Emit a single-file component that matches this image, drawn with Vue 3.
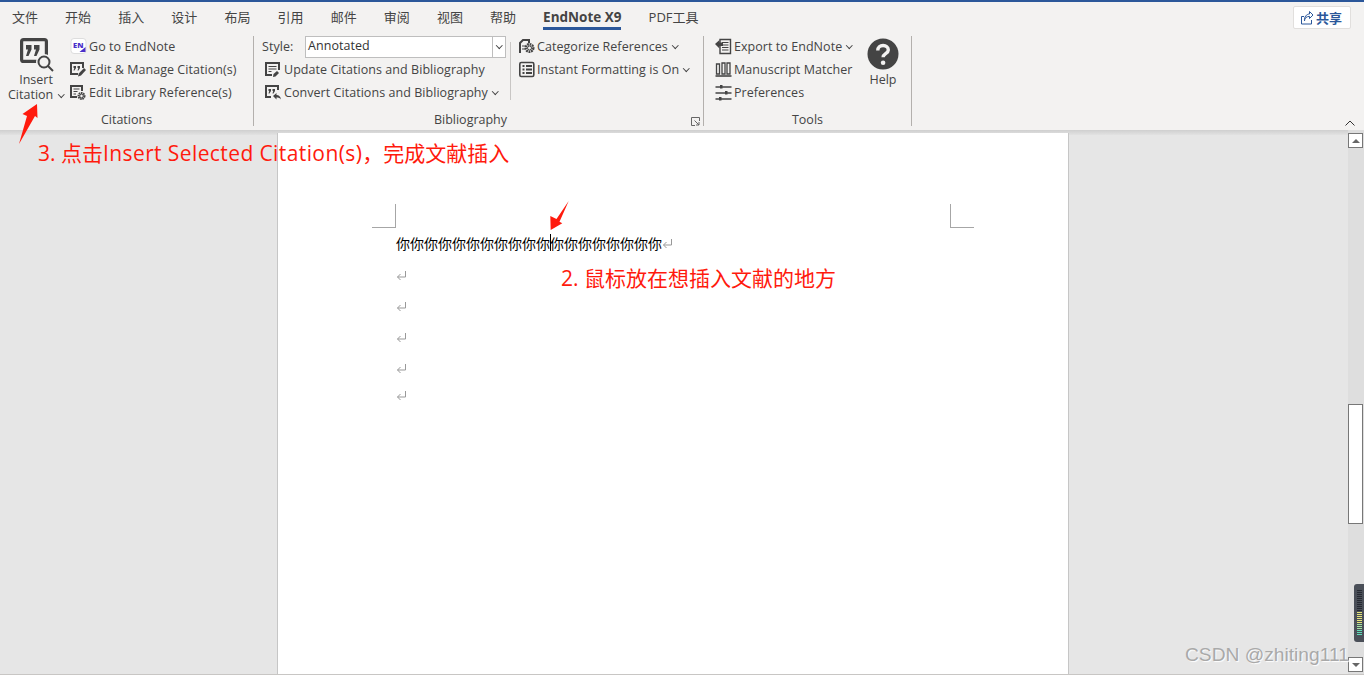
<template>
  <div class="word">
    <div class="topline"></div>

    <div class="tabs">
      <span
        v-for="tab in tabs"
        :key="tab"
        class="tab"
        :class="{ active: tab === 'EndNote X9' }"
      >{{ tab }}</span>
      <button class="share">
        <svg width="16" height="16" viewBox="0 0 16 16" fill="none" stroke="#2b579a" stroke-width="1">
          <path d="M5 6.500H2.500v7.500h10V10" />
          <path d="M5.500 11c0-3 2-4.600 5-4.600V8.500l3.500-3.500L10.500 1.500V4C7.500 4 5 7 5.500 11z" />
        </svg>
        共享
      </button>
    </div>

    <div class="ribbon">
      <section class="group citations">
        <div class="group-body">
          <div class="big-btn">
            <svg class="insert-icon" width="36" height="36" viewBox="0 0 36 36">
              <rect x="3.600" y="2.600" width="24.800" height="21.800" rx="2" fill="none" stroke="#444" stroke-width="3.200" />
              <path d="M8 8h5.500v4.500L10.500 19H8l2-6.500H8zM16 8h5.500v4.500L18.500 19H16l2-6.500h-2z" fill="#444" />
              <circle cx="26" cy="25" r="8" fill="#f3f2f1" />
              <circle cx="26" cy="25" r="5.500" fill="none" stroke="#444" stroke-width="2" />
              <path d="M30 29l5 5" stroke="#444" stroke-width="2" />
            </svg>
            <span class="big-label">Insert</span>
            <span class="big-label citation-label">Citation <i class="chev"></i></span>
          </div>
          <div class="rows">
            <div class="row">
              <svg class="ico" width="17" height="17" viewBox="0 0 17 17">
                <rect x="1" y="0.500" width="15" height="15" rx="3" fill="#fff" stroke="#ddd" />
                <text x="3" y="10" class="en">EN</text>
                <path d="M9.500 14l6-5v5z" fill="#4b2fc9" />
              </svg>
              Go to EndNote
            </div>
            <div class="row">
              <svg class="ico" width="17" height="17" viewBox="0 0 17 17">
                <path d="M8 13H1V2h12v5" fill="none" stroke="#444" stroke-width="2" />
                <path d="M3.500 5h2.500v2L4.500 9.500H3.500l.8-2.500h-.8zM7.500 5H10v2L8.500 9.500h-1l.8-2.500h-.8z" fill="#444" />
                <path d="M8 15.500l.8-3L14 7l2 2-5 5.500z" fill="#444" />
              </svg>
              Edit &amp; Manage Citation(s)
            </div>
            <div class="row">
              <svg class="ico" width="17" height="17" viewBox="0 0 17 17">
                <path d="M7 13H1V2h11v5" fill="none" stroke="#444" stroke-width="2" />
                <path d="M3.500 5h6M3.500 7.500h4M3.500 10h2.500" stroke="#444" />
                <circle cx="11.500" cy="12" r="3" fill="none" stroke="#444" stroke-width="2" stroke-dasharray="1.600 .6" />
                <circle cx="11.500" cy="12" r="1.800" fill="none" stroke="#444" />
              </svg>
              Edit Library Reference(s)
            </div>
          </div>
        </div>
        <div class="group-label">Citations</div>
      </section>
      <div class="sep"></div>

      <section class="group biblio">
        <div class="group-body">
          <div class="rows left-col">
            <div class="row style-row">
              <span class="style-label">Style:</span>
              <div class="select">
                <span class="select-value">Annotated</span>
                <span class="select-btn"><i class="chev"></i></span>
              </div>
            </div>
            <div class="row">
              <svg class="ico" width="17" height="17" viewBox="0 0 17 17">
                <path d="M7 14H1V2h13v7" fill="none" stroke="#444" stroke-width="2" />
                <path d="M3.500 5.500h8M3.500 8h8M3.500 10.500h3" stroke="#444" />
                <path d="M8 16l.5-3 3.500-3 2 2-3.500 3.500z" fill="#444" />
              </svg>
              Update Citations and Bibliography
            </div>
            <div class="row">
              <svg class="ico" width="17" height="17" viewBox="0 0 17 17">
                <path d="M6 13H1V2h12v4" fill="none" stroke="#444" stroke-width="2" />
                <path d="M3.500 5H6v2L4.500 9.500h-1l.7-2.500h-.7zM7.500 5H10v2L8.500 9.500h-1l.7-2.500h-.7z" fill="#444" />
                <path d="M8 12l3.500-3v2c2.500 0 4 1.500 4.500 4.500-1-1.500-2.500-2-4.500-2v2z" fill="#444" />
              </svg>
              Convert Citations and Bibliography <i class="chev"></i>
            </div>
          </div>
          <div class="inner-sep"></div>
          <div class="rows right-col">
            <div class="row">
              <svg class="ico" width="17" height="17" viewBox="0 0 17 17">
                <path d="M1 15V5l3-3h6v3" fill="none" stroke="#444" stroke-width="2" />
                <path d="M3 8h3M3 11h3" stroke="#444" />
                <circle cx="10.500" cy="10" r="3.800" fill="none" stroke="#444" stroke-width="2.400" stroke-dasharray="1.800 .7" />
                <circle cx="10.500" cy="10" r="2" fill="none" stroke="#444" />
              </svg>
              Categorize References <i class="chev"></i>
            </div>
            <div class="row">
              <svg class="ico" width="17" height="17" viewBox="0 0 17 17">
                <rect x="0.800" y="1.500" width="14" height="14" rx="1.500" fill="none" stroke="#444" stroke-width="1.600" />
                <path d="M3.500 5h2M7 5h6M3.500 8.500h2M7 8.500h6M3.500 12h2M7 12h6" stroke="#444" stroke-width="1.800" />
              </svg>
              Instant Formatting is On <i class="chev"></i>
            </div>
          </div>
        </div>
        <div class="group-label bib-label">Bibliography</div>
        <svg class="launcher" width="9" height="9" viewBox="0 0 9 9" fill="none" stroke="#666">
          <path d="M8.500 4V.5H.5v8H4" />
          <path d="M3.500 3.500l4.500 4.500M8 5v3H5" />
        </svg>
      </section>
      <div class="sep"></div>

      <section class="group tools">
        <div class="group-body">
          <div class="rows tool-rows">
            <div class="row">
              <svg class="ico" width="17" height="17" viewBox="0 0 17 17">
                <path d="M5 1.500h10.500v14H5z" fill="none" stroke="#444" stroke-width="1.400" />
                <path d="M7 4.500h6.500M7 7h6.500M7 9.500h6.500M7 12h6.500" stroke="#444" />
                <path d="M0 6l4.500-4v2.500H8V8H4.500v2.500z" fill="#444" />
              </svg>
              Export to EndNote <i class="chev"></i>
            </div>
            <div class="row">
              <svg class="ico" width="17" height="17" viewBox="0 0 17 17" fill="none" stroke="#444">
                <path d="M1.500 13V3h3v10zM7 13V2h3v11zM12 13V2h3v11z" stroke-width="1.300" />
                <path d="M0.500 15h16" stroke-width="1.600" />
              </svg>
              Manuscript Matcher
            </div>
            <div class="row">
              <svg class="ico" width="17" height="17" viewBox="0 0 17 17">
                <path d="M0.500 3h16M0.500 9h16M0.500 15h16" stroke="#444" stroke-width="1.300" />
                <path d="M5 1h2.500v3.500H5zM10 7h2.500v3.500H10zM4 13h2.500v3.500H4z" fill="#444" />
              </svg>
              Preferences
            </div>
          </div>
          <div class="help">
            <svg width="32" height="32" viewBox="0 0 32 32">
              <circle cx="16" cy="16" r="15.500" fill="#444" />
              <path d="M10.800 12.500c0-3 2.300-5 5.300-5s5.200 1.800 5.200 4.400c0 3.800-5.200 3.700-5.200 7.300" fill="none" stroke="#f3f2f1" stroke-width="3.400" />
              <circle cx="16.100" cy="24.800" r="2.300" fill="#f3f2f1" />
            </svg>
            <span class="big-label">Help</span>
          </div>
        </div>
        <div class="group-label">Tools</div>
      </section>
      <div class="sep"></div>

      <svg class="collapse" width="10" height="6" viewBox="0 0 10 6" fill="none" stroke="#333">
        <path d="M.5 5.500L5 1l4.500 4.500" />
      </svg>
    </div>

    <div class="workspace">
      <div class="ribbon-shadow"></div>
      <main class="canvas">
        <div class="page">
          <div class="crop-row">
            <div class="crop crop-left"></div>
            <div class="crop crop-right"></div>
          </div>
          <div class="para para-text">
            <span>{{ textBefore }}</span><i class="caret"></i><span>{{ textAfter }}</span>
            <svg class="ret" width="11" height="11" viewBox="0 0 11 11" fill="none" stroke="#999">
              <path d="M9.500 1v6H1.500M4.500 4l-3 3 3 3" />
            </svg>
          </div>
          <div v-for="n in 5" :key="n" class="para">
            <svg class="ret" width="11" height="11" viewBox="0 0 11 11" fill="none" stroke="#999">
              <path d="M9.500 1v6H1.500M4.500 4l-3 3 3 3" />
            </svg>
          </div>
        </div>
      </main>

      <aside class="scrollbar">
        <button class="sb-btn"><i class="tri-up"></i></button>
        <div class="sb-track">
          <div class="sb-thumb"></div>
          <div class="meter">
            <i v-for="(c, i) in meterBars" :key="i" :style="{ background: c }"></i>
          </div>
        </div>
        <button class="sb-btn"><i class="tri-down"></i></button>
      </aside>
    </div>

    <!-- red notes drawn over the screenshot -->
    <svg class="arrow arrow-insert" width="22" height="44" viewBox="0 0 22 44">
      <path d="M1 41L9 13 4.500 11 19 1l.5 14-2.500-2z" fill="#ff1a0d" />
    </svg>
    <svg class="arrow arrow-caret" width="22" height="32" viewBox="0 0 22 32">
      <path d="M1.700 30L1.300 16 7.500 19 19.700 1 10.500 21.700 13.300 23.300z" fill="#ff1a0d" />
    </svg>
    <div class="note note-insert">3. 点击<span class="note-latin">Insert Selected Citation(s)</span>，完成文献插入</div>
    <div class="note note-caret">2. 鼠标放在想插入文献的地方</div>
    <div class="watermark">CSDN @zhiting111</div>
  </div>
</template>

<script setup>
const tabs = [
  "文件",
  "开始",
  "插入",
  "设计",
  "布局",
  "引用",
  "邮件",
  "审阅",
  "视图",
  "帮助",
  "EndNote X9",
  "PDF工具",
];

const textBefore = "你".repeat(11);
const textAfter = "你".repeat(8);

// little level meter stuck on the scrollbar
const meterBars = [
  ...Array(11).fill("#262a32"),
  ...Array(6).fill("#e4e47a"),
  ...Array(3).fill("#a4e4a0"),
  ...Array(3).fill("#60dcb8"),
];
</script>

<style>
html,
body {
  margin: 0;
  overflow: hidden;
}
</style>

<style scoped>
.word {
  position: relative;
  display: flex;
  flex-direction: column;
  width: 1364px;
  height: 675px;
  overflow: hidden;
  background: #e6e6e6;
  color: #444;
  font-family: "Open Sans", "Noto Sans CJK SC", sans-serif;
  font-size: 12.5px;
}

.topline {
  height: 2px;
  background: #2b579a;
}

.tabs {
  display: flex;
  align-items: flex-start;
  gap: 27.100px;
  height: 31px;
  padding-left: 12px;
  background: #f3f2f1;
}

.tab {
  padding: 6px 0 0;
  height: 19px;
  line-height: 18px;
  font-family: "Open Sans", "Noto Sans CJK SC", sans-serif;
  font-size: 13px;
  white-space: nowrap;
}

.tab.active {
  border-bottom: 3px solid #2b579a;
  font-size: 13.500px;
  font-weight: 700;
}

.share {
  display: flex;
  align-items: center;
  gap: 1px;
  margin: 4px 13px 0 auto;
  width: 58px;
  height: 23px;
  padding: 0 0 0 5px;
  border: 1px solid #e1dfdd;
  border-radius: 2px;
  background: #fff;
  color: #2b579a;
  font-family: "Noto Sans CJK SC", sans-serif;
  font-size: 13px;
  font-weight: 700;
}

.ribbon {
  position: relative;
  display: flex;
  height: 97px;
  background: #f3f2f1;
}

.group {
  position: relative;
  display: flex;
  flex-direction: column;
  padding-top: 2px;
  box-sizing: border-box;
}

.citations {
  width: 253px;
}

.biblio {
  width: 449px;
}

.tools {
  width: 207px;
}

.group-body {
  display: flex;
  flex: 1;
}

.group-label {
  height: 20px;
  line-height: 20px;
  text-align: center;
}

.bib-label {
  padding-right: 16px;
}

.sep {
  width: 1px;
  margin: 3px 0 4px;
  background: #b3b0ad;
}

.inner-sep {
  width: 1px;
  height: 58px;
  margin-top: 7px;
  background: #c8c6c4;
}

.big-btn {
  display: flex;
  flex-direction: column;
  align-items: center;
  width: 70px;
  padding-left: 2px;
  box-sizing: border-box;
}

.insert-icon {
  flex: none;
  margin-top: 2px;
}

.big-label {
  height: 14px;
  line-height: 14px;
  white-space: nowrap;
}

.citation-label {
  margin-top: 1px;
}

.citation-label .chev {
  margin: 0 0 3px 3px;
}

.rows {
  display: flex;
  flex-direction: column;
}

.row {
  display: flex;
  align-items: center;
  height: 23px;
  letter-spacing: 0.050px;
  white-space: nowrap;
}

.ico {
  flex: none;
  margin-right: 2px;
}

.en {
  font-family: "Open Sans", sans-serif;
  font-size: 7.500px;
  font-weight: 800;
  fill: #4b2fc9;
}

.chev {
  display: inline-block;
  width: 3.500px;
  height: 3.500px;
  margin: 0 2px 3px 5px;
  border-right: 1px solid #444;
  border-bottom: 1px solid #444;
  transform: rotate(45deg);
}

.left-col {
  width: 256px;
  padding-left: 11px;
  box-sizing: border-box;
}

.style-row {
  margin-left: -3px;
}

.style-label {
  width: 43px;
}

.select {
  display: flex;
  flex: none;
  width: 201px;
  height: 22px;
  margin-top: 1px;
  box-sizing: border-box;
  border: 1px solid #bebebe;
  background: #fff;
}

.select-value {
  flex: 1;
  padding-left: 2px;
  line-height: 18px;
  color: #333;
}

.select-btn {
  display: flex;
  align-items: center;
  justify-content: center;
  width: 12px;
  border-left: 1px solid #bebebe;
}

.select-btn .chev {
  margin: 0 0 3px;
}

.right-col {
  padding-left: 8px;
}

.right-col .ico {
  margin-right: 1px;
}

.launcher {
  position: absolute;
  right: 3px;
  bottom: 4px;
}

.tool-rows {
  width: 152px;
  padding-left: 11px;
}

.help {
  display: flex;
  flex-direction: column;
  align-items: center;
  gap: 3px;
  width: 32px;
  padding-top: 3px;
}

.collapse {
  position: absolute;
  right: 9px;
  bottom: 4px;
}

.workspace {
  position: relative;
  display: flex;
  flex: 1;
  min-height: 0;
  border-bottom: 1px solid #c8c6c4;
}

.ribbon-shadow {
  position: absolute;
  top: 0;
  left: 0;
  right: 0;
  height: 5px;
  background: linear-gradient(#cfcfcf, #e2e2e2);
}

.canvas {
  position: relative;
  flex: 1;
  min-width: 0;
  padding: 3px 0 0 277px;
  overflow: hidden;
}

.page {
  width: 790px;
  height: 700px;
  border: 1px solid #c6c6c6;
  border-top: none;
  background: #fff;
  color: #000;
  font-family: "Noto Sans CJK SC", sans-serif;
  font-size: 14px;
}

.crop-row {
  display: flex;
  justify-content: space-between;
  padding: 71px 94px 0;
}

.crop {
  width: 23px;
  height: 23px;
  border-bottom: 1px solid #a6a6a6;
}

.crop-left {
  border-right: 1px solid #a6a6a6;
}

.crop-right {
  border-left: 1px solid #a6a6a6;
}

.para {
  display: flex;
  align-items: center;
  height: 31px;
  padding-left: 118px;
  white-space: nowrap;
}

.para-text {
  height: 29px;
  margin-bottom: 2px;
}

.para:last-child {
  height: 23px;
}

.caret {
  width: 1px;
  height: 17px;
  margin: 0 -1px 0 0;
  background: #000;
}

.ret {
  flex: none;
  margin-top: 1px;
}

.scrollbar {
  position: relative;
  display: flex;
  flex-direction: column;
  flex: none;
  width: 16px;
  padding: 3px 0 2px;
  background: #dedede;
}

.sb-btn {
  display: flex;
  align-items: center;
  justify-content: center;
  flex: none;
  width: 15px;
  height: 15px;
  padding: 0;
  border: 1px solid #777;
  background: #fff;
}

.tri-up,
.tri-down {
  width: 0;
  height: 0;
  border-left: 4px solid transparent;
  border-right: 4px solid transparent;
}

.tri-up {
  border-bottom: 4px solid #666;
}

.tri-down {
  border-top: 4px solid #666;
}

.sb-track {
  position: relative;
  flex: 1;
}

.sb-thumb {
  position: absolute;
  top: 256px;
  left: 0;
  width: 13px;
  height: 118px;
  border: 1px solid #777;
  background: #fff;
}

.meter {
  position: absolute;
  top: 436px;
  right: 0;
  display: flex;
  flex-direction: column;
  gap: 1px;
  width: 10px;
  height: 58px;
  padding: 6px 2px 0 3px;
  box-sizing: border-box;
  border-radius: 3px 0 0 3px;
  background: #4a4f58;
}

.meter i {
  flex: none;
  height: 1px;
}

.arrow {
  position: absolute;
  z-index: 3;
}

.arrow-insert {
  left: 18px;
  top: 103px;
}

.arrow-caret {
  left: 549px;
  top: 200px;
}

.note {
  position: absolute;
  z-index: 3;
  color: #ff1a0d;
  font-size: 21px;
  line-height: 28px;
  white-space: nowrap;
}

.note-latin {
  letter-spacing: 0.400px;
}

.note-insert {
  left: 38px;
  top: 139px;
}

.note-caret {
  left: 561px;
  top: 264px;
}

.watermark {
  position: absolute;
  z-index: 3;
  left: 1185px;
  top: 642px;
  color: #a9a9a9;
  font-family: "Liberation Sans", sans-serif;
  font-size: 19.200px;
  line-height: 26px;
  text-shadow: 1px 1px 1px #fff;
  white-space: nowrap;
}
</style>
